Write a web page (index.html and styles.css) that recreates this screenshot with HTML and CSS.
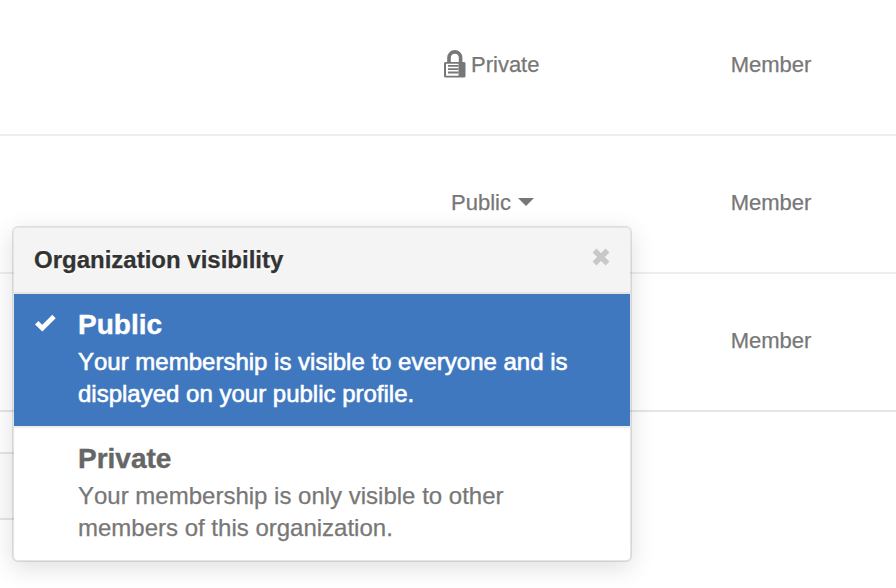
FILE: index.html
```html
<!DOCTYPE html>
<html lang="en">
<head>
<meta charset="utf-8">
<title>Organization members</title>
<link rel="stylesheet" href="styles.css">
</head>
<body>
<main class="members">
  <div class="row row-first">
    <div class="visibility">
      <svg class="lock" width="22" height="28" viewBox="0 0 22 28" aria-hidden="true">
        <path d="M5 13V7.700a5.700 5.700 0 0 1 11.600 0V13" fill="none" stroke="#777" stroke-width="3.600"/>
        <path fill="#777" fill-rule="evenodd" d="M1.500 12h18.500q1.500 0 1.500 1.500v12.500q0 1.500-1.500 1.500H1.500q-1.500 0-1.500-1.500V13.500q0-1.500 1.500-1.500zM2 13.700v12.100h12.500V13.700z"/>
        <path fill="#777" d="M4 15h10.500v1.800H4zM4 18.300h10.500v1.800H4zM4 21.600h10.500v1.800H4z"/>
      </svg>
      <span>Private</span>
    </div>
    <div class="role">Member</div>
  </div>
  <div class="row">
    <div class="visibility visibility-menu"><span>Public</span><i class="caret"></i></div>
    <div class="role">Member</div>
  </div>
  <div class="row row-last">
    <div class="visibility"></div>
    <div class="role">Member</div>
  </div>
  <div class="pager"></div>
</main>
<section class="popover">
  <header class="popover-header">
    <h2>Organization visibility</h2>
    <svg width="18" height="18" viewBox="0 0 18 18" aria-label="Close"><path d="M2.500 2.500l13 13M15.500 2.500l-13 13" stroke="#c8c8c8" stroke-width="5.400"/></svg>
  </header>
  <div class="option selected">
    <div class="mark"><svg width="22" height="18" viewBox="0 0 22 18" aria-hidden="true"><path d="M2.700 8.800l5.600 5.400L20 2.500" fill="none" stroke="#fff" stroke-width="4.800"/></svg></div>
    <div>
      <h3>Public</h3>
      <p>Your membership is visible to everyone and is<br>displayed on your public profile.</p>
    </div>
  </div>
  <div class="option">
    <div class="mark"></div>
    <div>
      <h3>Private</h3>
      <p>Your membership is only visible to other<br>members of this organization.</p>
    </div>
  </div>
</section>
</body>
</html>
```

FILE: styles.css
```css
* { box-sizing: border-box; }
body {
  margin: 0;
  height: 588px;
  overflow: hidden;
  position: relative;
  background: #fff;
  color: #777;
  font: 22px/30px "Liberation Sans", Arial, sans-serif;
  -webkit-text-stroke: .25px;
}
.row {
  display: grid;
  grid-template-columns: 646px 250px;
  align-items: center;
  height: 138px;
  border-bottom: 2px solid #eee;
}
.row-first { height: 136px; padding-bottom: 4px; }
.row:not(.row-first) { padding-bottom: 2px; }
.row-last { border-color: #e5e5e5; }
.visibility { display: flex; align-items: center; padding-left: 444px; }
.visibility span { white-space: nowrap; }
.lock { margin: -2px 5px 0 0; }
.visibility-menu { padding-left: 451px; }
.caret {
  margin: -2px 0 0 7px;
  border: 8px solid transparent;
  border-top-color: #777;
  border-bottom: 0;
}
.role { text-align: center; }
.pager {
  width: 100px;
  height: 68px;
  margin-top: 40px;
  border: solid #e5e5e5;
  border-width: 2px 0;
  background: #fcfcfc;
}
.popover {
  position: absolute;
  left: 12px;
  top: 226px;
  width: 620px;
  height: 336px;
  overflow: hidden;
  border: 2px solid rgba(0, 0, 0, .1);
  border-radius: 6px;
  background: #fff;
  background-clip: padding-box;
  box-shadow: 0 6px 24px rgba(0, 0, 0, .13);
}
.popover-header {
  display: flex;
  align-items: center;
  justify-content: space-between;
  height: 66px;
  padding: 0 20px;
  border-bottom: 2px solid #e5e5e5;
  background: #f4f4f4;
}
h2, h3, p { margin: 0; }
h2 { color: #333; font-size: 24px; line-height: 30px; text-shadow: 0 2px 0 #fff; }
.popover-header svg { margin-top: -6px; }
.option {
  display: grid;
  grid-template-columns: 44px 1fr;
  height: 132px;
  padding: 15px 20px 0;
}
.mark { padding-top: 5px; }
.mark svg { display: block; }
.option h3 { color: #666; font-size: 28px; line-height: 32px; -webkit-text-stroke: .4px; }
.option p {
  margin-top: 5px;
  font-size: 24px;
  line-height: 32px;
  font-kerning: none;
  white-space: nowrap;
}
.selected {
  height: 134px;
  border-bottom: 2px solid #eee;
  background: #4078c0;
  color: #fff;
}
.selected h3 { color: #fff; }
.selected p { -webkit-text-stroke: .6px #fff; }
```
